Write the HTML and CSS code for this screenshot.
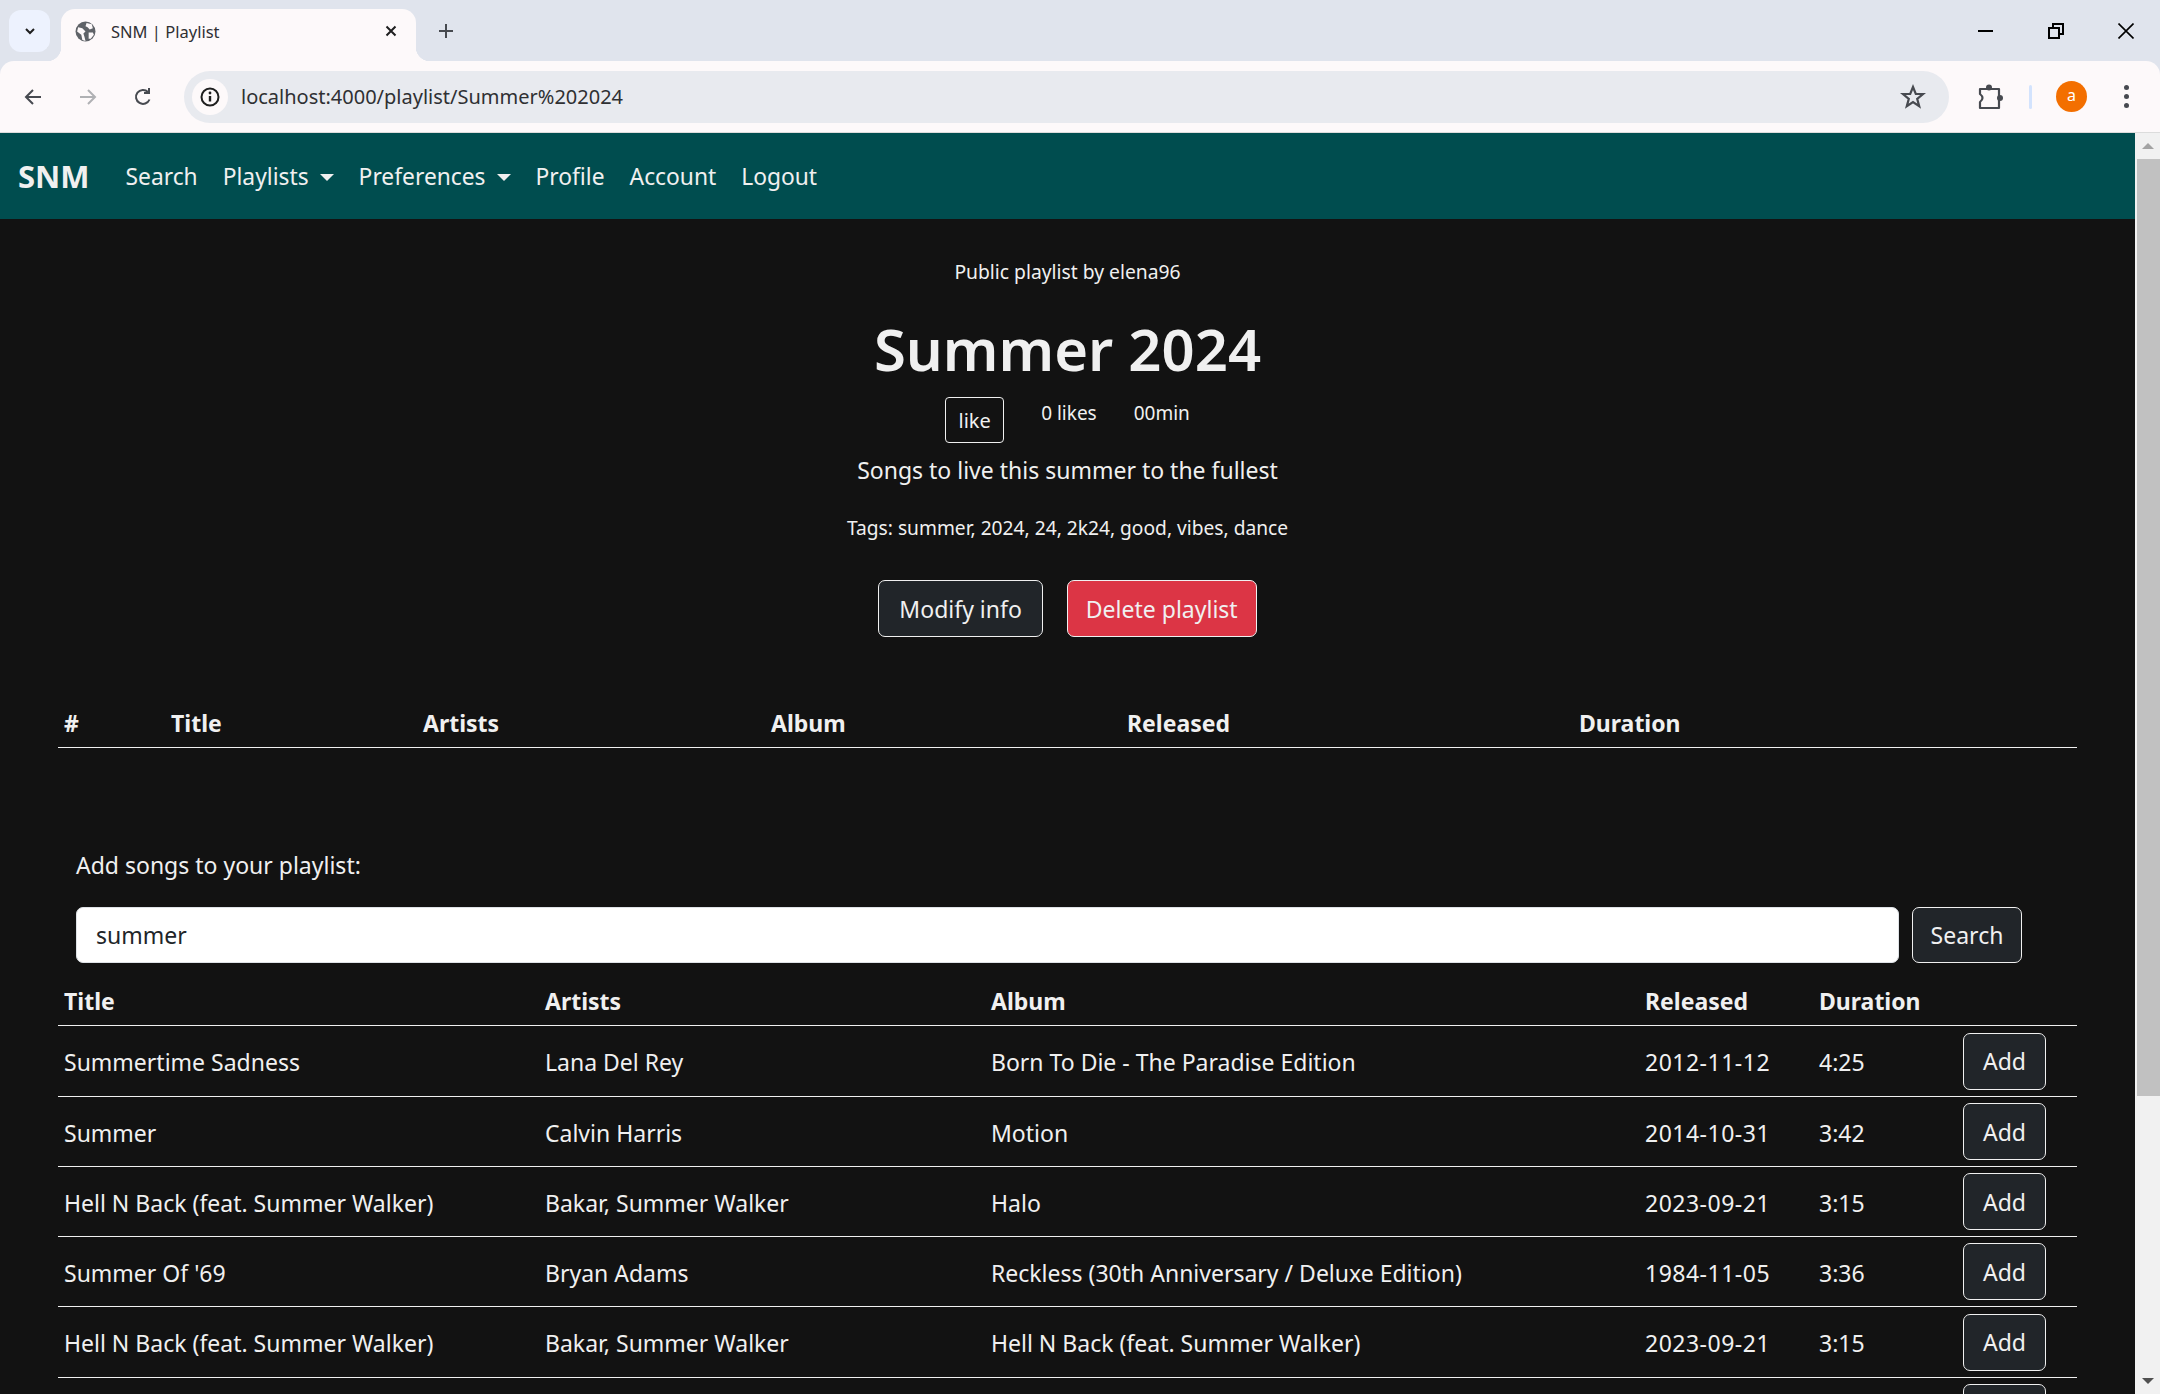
FILE: index.html
```html
<!DOCTYPE html>
<html lang="en">
<head>
<meta charset="UTF-8">
<title>SNM | Playlist</title>
<link rel="stylesheet" href="styles.css">
</head>
<body>
<div class="tabstrip">
  <div class="tab-list"><svg width="14" height="14" viewBox="0 0 14 14"><path d="M3 5l4 4 4-4" fill="none" stroke="#1f1f1f" stroke-width="2"/></svg></div>
  <div class="tab">
    <svg class="tab-globe" width="21" height="21" viewBox="0 0 20 20"><circle cx="10" cy="10" r="9.500" fill="#5f6368"/><path d="M3 6l4 1 3 3-2 2 1 3 1 4-3-1-1-5-4-3zM11 2l5 1 1 4-3 1-2-2-2-1zM13 11l4 0 1 2-3 4-2 0z" fill="#fdf9fa"/></svg>
    <span class="tab-title">SNM | Playlist</span>
    <svg width="14" height="14" viewBox="0 0 14 14"><path d="M2.500 2.500l9 9M11.500 2.500l-9 9" stroke="#1f1f1f" stroke-width="2"/></svg>
  </div>
  <svg class="new-tab" width="18" height="18" viewBox="0 0 18 18"><path d="M9 2v14M2 9h14" stroke="#474a50" stroke-width="2"/></svg>
  <div class="window-controls">
    <svg width="16" height="16" viewBox="0 0 16 16"><path d="M0 8h15" stroke="#000" stroke-width="2"/></svg>
    <svg width="16" height="16" viewBox="0 0 16 16"><path d="M1 5h10v10H1zM5 4V1h10v10h-3" fill="none" stroke="#000" stroke-width="2"/></svg>
    <svg width="16" height="16" viewBox="0 0 16 16"><path d="M.5.500l15 15M15.500.500l-15 15" stroke="#000" stroke-width="1.600"/></svg>
  </div>
</div>
<div class="toolbar">
  <div class="nav-icons">
    <svg width="20" height="20" viewBox="0 0 20 20"><path d="M18 10H3M10 3l-7 7 7 7" fill="none" stroke="#474a50" stroke-width="2"/></svg>
    <svg width="20" height="20" viewBox="0 0 20 20"><path d="M2 10h15M10 3l7 7-7 7" fill="none" stroke="#b0b1b4" stroke-width="2"/></svg>
    <svg width="20" height="20" viewBox="0 0 20 20"><path d="M16.500 12.500A7 7 0 1 1 15 5M16 1v5h-5" fill="none" stroke="#474a50" stroke-width="2"/></svg>
  </div>
  <div class="omnibox">
    <div class="site-info"><svg width="20" height="20" viewBox="0 0 20 20"><circle cx="10" cy="10" r="8.500" fill="none" stroke="#1f1f1f" stroke-width="2"/><path d="M10 9v5.500" stroke="#1f1f1f" stroke-width="2.400"/><circle cx="10" cy="6" r="1.400" fill="#1f1f1f"/></svg></div>
    <span class="url">localhost:4000/playlist/Summer%202024</span>
    <svg class="star" width="26" height="26" viewBox="0 0 26 26"><path d="M13 3l2.800 7h7.200l-5.800 4.800 2 7.400-6.200-4.200-6.200 4.200 2-7.400L3 10h7.200z" fill="none" stroke="#474a50" stroke-width="2.200"/></svg>
  </div>
  <svg class="puzzle" width="26" height="26" viewBox="0 0 26 26"><path d="M3 5H22V24H3V18Q8 14 3 10Z" fill="none" stroke="#474a50" stroke-width="2.200" stroke-linejoin="round"/><circle cx="12" cy="3.500" r="3" fill="#474a50"/><circle cx="23" cy="14" r="3" fill="#474a50"/></svg>
  <div class="toolbar-sep"></div>
  <div class="avatar">a</div>
  <div class="menu-dots"><i></i><i></i><i></i></div>
</div>
<div class="page">
  <div class="content">
    <nav class="navbar">
      <a class="brand">SNM</a>
      <a class="nav-link">Search</a>
      <a class="nav-link caret">Playlists</a>
      <a class="nav-link caret">Preferences</a>
      <a class="nav-link">Profile</a>
      <a class="nav-link">Account</a>
      <a class="nav-link">Logout</a>
    </nav>
    <section class="info">
      <p class="owner">Public playlist by elena96</p>
      <h1>Summer 2024</h1>
      <div class="like-row">
        <button class="like-btn">like</button>
        <span>0 likes</span>
        <span>00min</span>
      </div>
      <p class="description">Songs to live this summer to the fullest</p>
      <p class="tags">Tags: summer, 2024, 24, 2k24, good, vibes, dance</p>
      <div class="actions">
        <button class="btn">Modify info</button>
        <button class="btn btn-danger">Delete playlist</button>
      </div>
    </section>
    <table class="songs-table">
      <colgroup><col class="c-num"><col class="c-title"><col class="c-artists"><col class="c-album"><col class="c-released"><col></colgroup>
      <thead><tr><th>#</th><th>Title</th><th>Artists</th><th>Album</th><th>Released</th><th>Duration</th></tr></thead>
    </table>
    <p class="add-label">Add songs to your playlist:</p>
    <form class="search-form">
      <input class="search-input" type="text" value="summer">
      <button class="btn search-btn" type="button">Search</button>
    </form>
    <table class="results-table">
      <colgroup><col class="r-title"><col class="r-artists"><col class="r-album"><col class="r-released"><col class="r-duration"><col></colgroup>
      <thead><tr><th>Title</th><th>Artists</th><th>Album</th><th>Released</th><th>Duration</th><th></th></tr></thead>
      <tbody>
        <tr><td>Summertime Sadness</td><td>Lana Del Rey</td><td>Born To Die - The Paradise Edition</td><td class="date">2012-11-12</td><td>4:25</td><td class="add-cell"><button class="btn add-btn">Add</button></td></tr>
        <tr><td>Summer</td><td>Calvin Harris</td><td>Motion</td><td class="date">2014-10-31</td><td>3:42</td><td class="add-cell"><button class="btn add-btn">Add</button></td></tr>
        <tr><td>Hell N Back (feat. Summer Walker)</td><td>Bakar, Summer Walker</td><td>Halo</td><td class="date">2023-09-21</td><td>3:15</td><td class="add-cell"><button class="btn add-btn">Add</button></td></tr>
        <tr><td>Summer Of '69</td><td>Bryan Adams</td><td>Reckless (30th Anniversary / Deluxe Edition)</td><td class="date">1984-11-05</td><td>3:36</td><td class="add-cell"><button class="btn add-btn">Add</button></td></tr>
        <tr><td>Hell N Back (feat. Summer Walker)</td><td>Bakar, Summer Walker</td><td>Hell N Back (feat. Summer Walker)</td><td class="date">2023-09-21</td><td>3:15</td><td class="add-cell"><button class="btn add-btn">Add</button></td></tr>
        <tr><td></td><td></td><td></td><td></td><td></td><td class="add-cell"><button class="btn add-btn"></button></td></tr>
      </tbody>
    </table>
  </div>
  <div class="scrollbar">
    <div class="scroll-btn"><i class="arrow-up"></i></div>
    <div class="scroll-thumb"></div>
    <div class="scroll-track"></div>
    <div class="scroll-btn"><i class="arrow-down"></i></div>
  </div>
</div>
</body>
</html>
```

FILE: styles.css
```css
html, body {
  margin: 0;
  height: 1394px;
  overflow: hidden;
}

body {
  font-family: "Noto Sans", "Open Sans", sans-serif;
  background-color: #e0e4ed;
  display: flex;
  flex-direction: column;
}

/* browser chrome */
.tabstrip {
  height: 61px;
  display: flex;
  align-items: flex-end;
  padding-left: 9px;
  flex-shrink: 0;
}

.tab-list {
  width: 41px;
  height: 42px;
  margin-bottom: 9px;
  margin-right: 11px;
  background-color: #edf2fe;
  border-radius: 12px;
  display: flex;
  align-items: center;
  justify-content: center;
  flex-shrink: 0;
}

.tab {
  position: relative;
  width: 355px;
  height: 52px;
  flex-shrink: 0;
  background-color: #fdf9fa;
  border-radius: 14px 14px 0 0;
  display: flex;
  align-items: center;
  padding: 0 18px 8px 14px;
  box-sizing: border-box;
}

.tab::before,
.tab::after {
  content: "";
  position: absolute;
  bottom: 0;
  width: 14px;
  height: 14px;
}

.tab::before {
  left: -14px;
  background: radial-gradient(circle at 0 0, #e0e4ed 14px, #fdf9fa 14.5px);
}

.tab::after {
  right: -14px;
  background: radial-gradient(circle at 100% 0, #e0e4ed 14px, #fdf9fa 14.5px);
}

.tab-globe {
  margin-right: 15px;
}

.tab-title {
  flex: 1;
  font-size: 16.500px;
  color: #2f3033;
}

.new-tab {
  align-self: center;
  margin-left: 21px;
}

.window-controls {
  margin-left: auto;
  align-self: center;
  display: flex;
  gap: 54px;
  padding-right: 26px;
}

.toolbar {
  position: relative;
  height: 71px;
  background-color: #fdf9fa;
  border-bottom: 1px solid #dcdcdc;
  border-radius: 14px 14px 0 0;
  display: flex;
  align-items: center;
  padding-left: 23px;
  flex-shrink: 0;
}

.nav-icons {
  display: flex;
  gap: 35px;
  margin-right: 31px;
}

.omnibox {
  width: 1765px;
  height: 52px;
  background-color: #e8eaef;
  border-radius: 26px;
  display: flex;
  align-items: center;
  box-sizing: border-box;
  padding: 0 23px 0 8px;
}

.site-info {
  width: 36px;
  height: 36px;
  background-color: #fdf9fa;
  border-radius: 18px;
  display: flex;
  align-items: center;
  justify-content: center;
  margin-right: 13px;
}

.url {
  flex: 1;
  font-size: 20px;
  color: #2f3033;
}

.puzzle {
  margin-left: 28px;
}

.toolbar-sep {
  width: 3px;
  height: 24px;
  margin-left: 26px;
  background-color: #d3e3fd;
  border-radius: 2px;
}

.avatar {
  width: 31px;
  height: 31px;
  margin-left: 24px;
  border-radius: 50%;
  background-color: #f36f00;
  color: #fff;
  font-size: 16px;
  line-height: 29px;
  text-align: center;
}

.menu-dots {
  margin-left: 37px;
  display: flex;
  flex-direction: column;
  gap: 4px;
}

.menu-dots i {
  width: 5px;
  height: 5px;
  border-radius: 50%;
  background-color: #474a50;
}

/* page */
.page {
  flex: 1;
  display: flex;
  min-height: 0;
}

.content {
  flex: 1;
  min-width: 0;
  background-color: #121212;
  color: #f0f0f0;
  font-size: 23px;
  overflow: hidden;
}

.scrollbar {
  width: 25px;
  background-color: #f1f1f1;
  display: flex;
  flex-direction: column;
}

.scroll-btn {
  height: 26px;
  display: flex;
  align-items: center;
  justify-content: center;
}

.scroll-thumb {
  height: 937px;
  margin-left: 2px;
  background-color: #c1c1c1;
}

.scroll-track {
  flex: 1;
}

.arrow-up, .arrow-down {
  border-left: 6px solid transparent;
  border-right: 6px solid transparent;
}

.arrow-up {
  border-bottom: 6px solid #a3a3a3;
}

.arrow-down {
  border-top: 6px solid #505050;
}

.navbar {
  height: 86px;
  background-color: #004d4f;
  display: flex;
  align-items: center;
  padding-left: 18px;
  font-size: 22.800px;
}

.brand {
  font-size: 31px;
  font-weight: 700;
  margin-right: 36px;
}

.nav-link {
  margin-right: 25px;
}

.caret::after {
  content: "";
  display: inline-block;
  margin-left: 11px;
  vertical-align: 4px;
  border-top: 7px solid #f0f0f0;
  border-left: 7px solid transparent;
  border-right: 7px solid transparent;
}

.info {
  text-align: center;
}

.owner {
  margin: 0;
  padding-top: 39px;
  font-size: 19.300px;
  line-height: 27px;
}

h1 {
  margin: 24px 0 0;
  font-size: 58px;
  font-weight: 600;
  line-height: 80px;
}

.like-row {
  display: flex;
  justify-content: center;
  align-items: flex-start;
  gap: 37px;
  margin-top: 8px;
  font-size: 19px;
}

.like-row span {
  line-height: 32px;
}

.like-btn {
  width: 59px;
  height: 46px;
  padding: 0;
  background: transparent;
  border: 1px solid #f0f0f0;
  border-radius: 4px;
  color: #f0f0f0;
  font-family: inherit;
  font-size: 20px;
}

.description {
  margin: 11px 0 0;
  line-height: 32px;
}

.tags {
  margin: 28px 0 0;
  font-size: 19.200px;
  line-height: 27px;
}

.actions {
  display: flex;
  justify-content: center;
  gap: 24px;
  margin-top: 39px;
}

.btn {
  height: 57px;
  padding: 0 20px;
  background-color: #212529;
  border: 1px solid #f0f0f0;
  border-radius: 7px;
  color: #f0f0f0;
  font: inherit;
}

.btn-danger {
  padding: 0 18px;
  background-color: #dc3545;
}

table {
  border-collapse: collapse;
  table-layout: fixed;
  width: 2019px;
  margin-left: 58px;
}

th {
  text-align: left;
  font-weight: 700;
  padding: 2px 6px 0;
}

td {
  padding: 2px 6px 0;
  height: 67px;
  border-bottom: 1px solid #f0f0f0;
}

.results-table tbody tr:nth-child(4n+1) td {
  height: 68px;
}

.add-cell {
  padding-top: 0;
}

.date {
  letter-spacing: 0.500px;
}

thead tr {
  border-bottom: 1px solid #f0f0f0;
}

.songs-table {
  margin-top: 60px;
}

.songs-table th {
  height: 48px;
}

.c-num { width: 107px; }
.c-title { width: 252px; }
.c-artists { width: 348px; }
.c-album { width: 356px; }
.c-released { width: 452px; }

.add-label {
  margin: 101px 0 0 76px;
  line-height: 32px;
}

.search-form {
  display: flex;
  margin: 26px 0 0 76px;
}

.search-input {
  width: 1823px;
  height: 56px;
  box-sizing: border-box;
  padding: 0 19px;
  background-color: #fff;
  border: 1px solid #dee2e6;
  border-radius: 7px;
  color: #212529;
  font: inherit;
}

.search-btn {
  width: 110px;
  height: 56px;
  padding: 0;
  margin-left: 13px;
}

.results-table {
  margin-top: 14px;
}

.results-table th {
  height: 48px;
  padding-top: 0;
}

.r-title { width: 481px; }
.r-artists { width: 446px; }
.r-album { width: 654px; }
.r-released { width: 174px; }
.r-duration { width: 144px; }

.add-btn {
  width: 83px;
  padding: 0;
  display: block;
}
```
